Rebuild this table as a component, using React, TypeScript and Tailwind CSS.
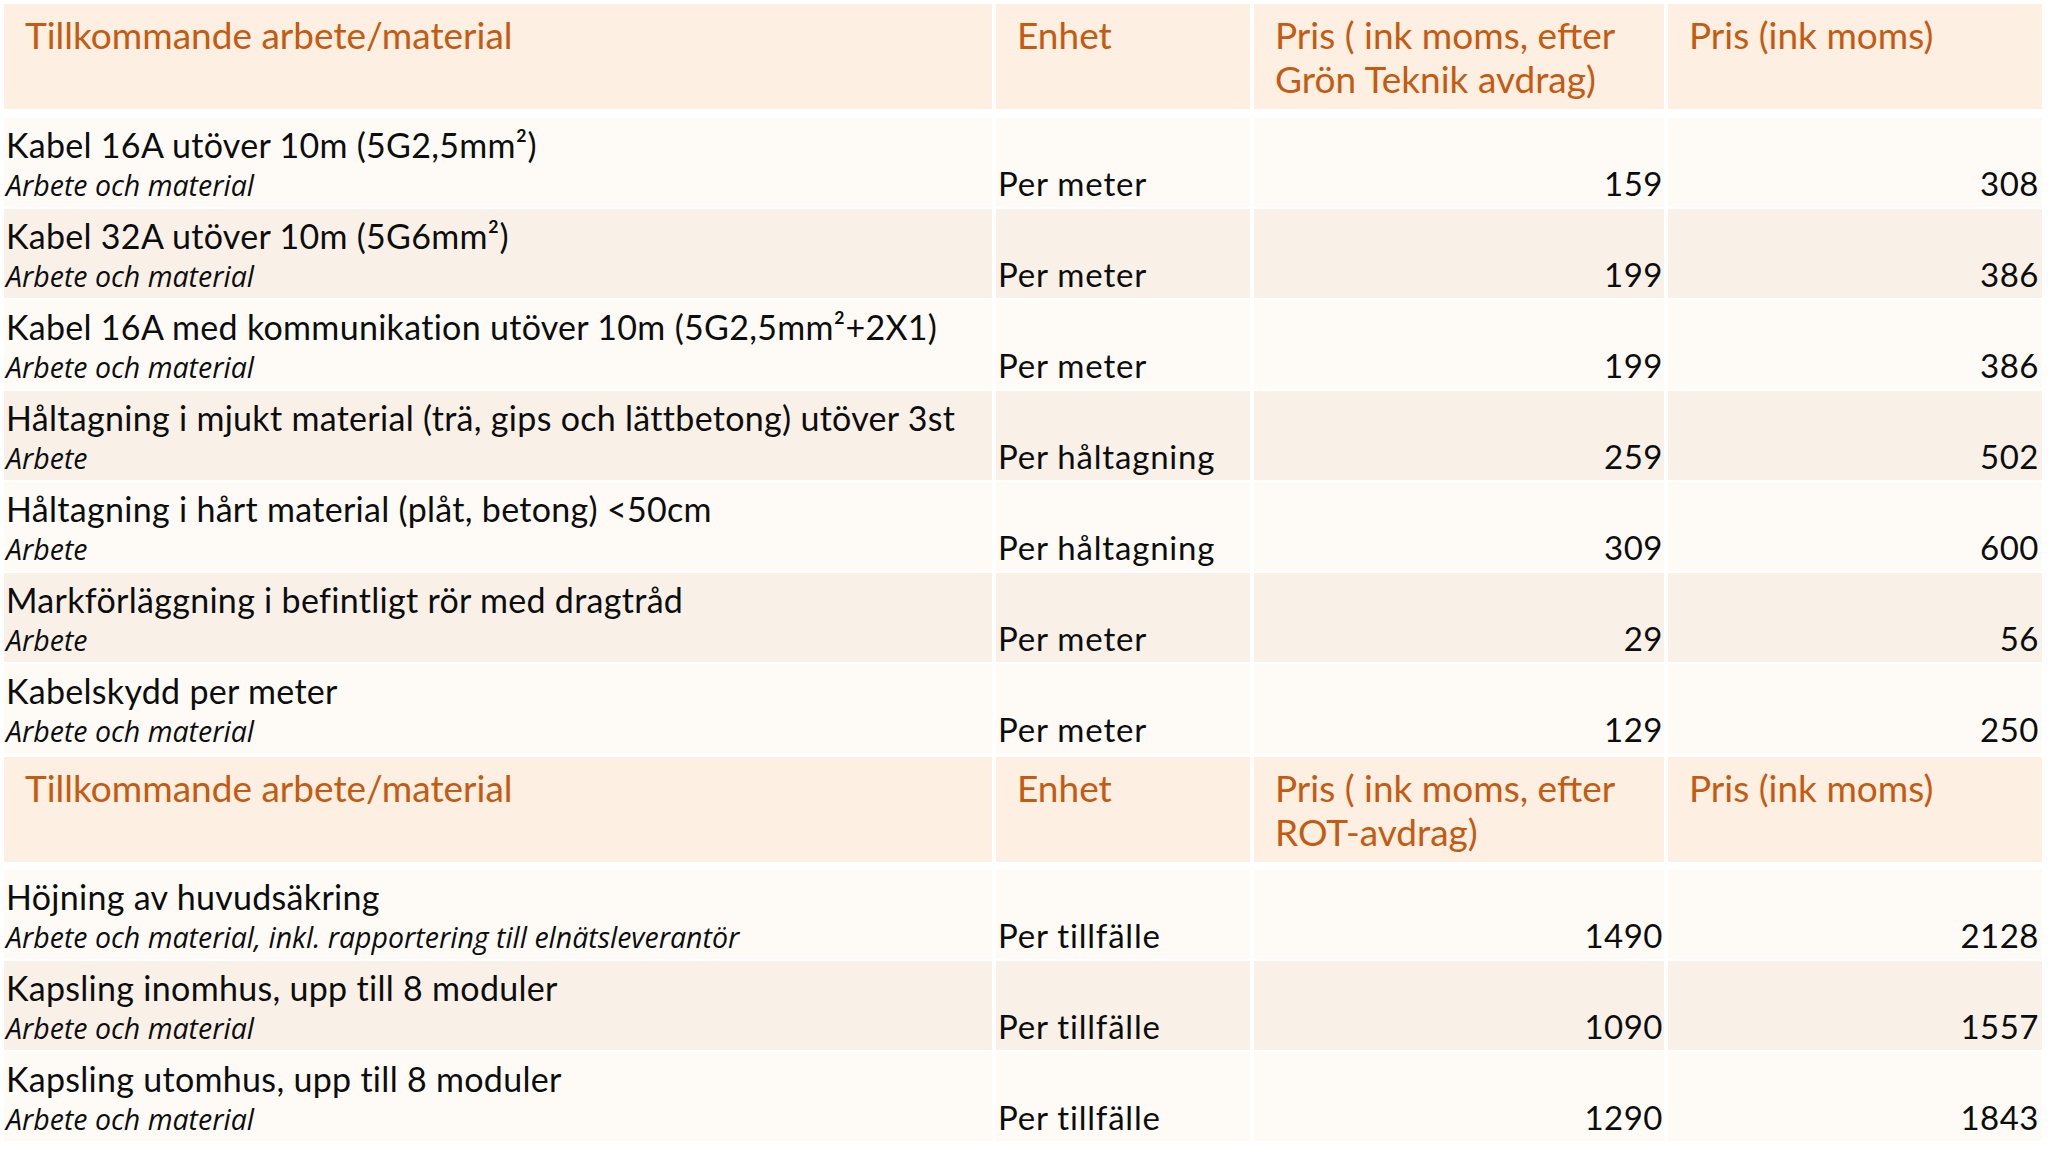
import type { ReactNode } from "react";

type Row = {
  title: ReactNode;
  sub: string;
  unit: string;
  green: string;
  full: string;
};

const firstRows: Row[] = [
  { title: "Kabel 16A utöver 10m (5G2,5mm²)", sub: "Arbete och material", unit: "Per meter", green: "159", full: "308" },
  { title: "Kabel 32A utöver 10m (5G6mm²)", sub: "Arbete och material", unit: "Per meter", green: "199", full: "386" },
  { title: "Kabel 16A med kommunikation utöver 10m (5G2,5mm²+2X1)", sub: "Arbete och material", unit: "Per meter", green: "199", full: "386" },
  { title: "Håltagning i mjukt material (trä, gips och lättbetong) utöver 3st", sub: "Arbete", unit: "Per håltagning", green: "259", full: "502" },
  { title: "Håltagning i hårt material (plåt, betong) <50cm", sub: "Arbete", unit: "Per håltagning", green: "309", full: "600" },
  { title: "Markförläggning i befintligt rör med dragtråd", sub: "Arbete", unit: "Per meter", green: "29", full: "56" },
  { title: "Kabelskydd per meter", sub: "Arbete och material", unit: "Per meter", green: "129", full: "250" },
];

const secondRows: Row[] = [
  { title: "Höjning av huvudsäkring", sub: "Arbete och material, inkl. rapportering till elnätsleverantör", unit: "Per tillfälle", green: "1490", full: "2128" },
  { title: "Kapsling inomhus, upp till 8 moduler", sub: "Arbete och material", unit: "Per tillfälle", green: "1090", full: "1557" },
  { title: "Kapsling utomhus, upp till 8 moduler", sub: "Arbete och material", unit: "Per tillfälle", green: "1290", full: "1843" },
];

const grid = "grid grid-cols-[988px_254px_410px_374px] gap-x-[4px]";

function HeaderRow({ priceLabel }: { priceLabel: ReactNode }) {
  const cell = "h-[105px] bg-[#fdf0e2] pl-[21px] pt-[9px] text-[37px] leading-[44px] text-[#c55a11]";
  return (
    <div className={grid}>
      <div className={cell}>Tillkommande arbete/material</div>
      <div className={cell}>Enhet</div>
      <div className={cell}>{priceLabel}</div>
      <div className={cell}>Pris (ink moms)</div>
    </div>
  );
}

function DataRow({ row, even }: { row: Row; even: boolean }) {
  const bg = even ? "bg-[#f9f1e8]" : "bg-[#fefbf7]";
  const tail = `flex h-[89px] items-end pb-[6px] text-[33px] leading-[36px] ${bg}`;
  return (
    <div className={grid}>
      <div className={`h-[89px] whitespace-nowrap pl-[2px] pt-[7px] ${bg}`}>
        <div className="text-[34px] leading-[40px] tracking-[0.3px]">{row.title}</div>
        <div className="text-[28.5px] italic leading-[41px] [font-family:'Open_Sans',sans-serif]">{row.sub}</div>
      </div>
      <div className={`${tail} pl-[2px] tracking-[0.8px]`}>{row.unit}</div>
      <div className={`${tail} justify-end pr-[1px] tracking-[0.5px]`}>{row.green}</div>
      <div className={`${tail} justify-end pr-[3px] tracking-[0.5px]`}>{row.full}</div>
    </div>
  );
}

export default function App() {
  return (
    <div className="min-h-[1165px] w-[2048px] bg-white pl-[4px] pt-[4px] text-[#0d0d0d] [font-family:Lato,'Open_Sans',sans-serif]">
      <HeaderRow
        priceLabel={
          <>
            Pris ( ink moms, efter
            <br />
            Grön Teknik avdrag)
          </>
        }
      />
      <div className="mt-[9px] flex flex-col gap-[2px]">
        {firstRows.map((row, i) => (
          <DataRow key={i} row={row} even={i % 2 === 1} />
        ))}
      </div>
      <div className="mt-[4px]">
        <HeaderRow
          priceLabel={
            <>
              Pris ( ink moms, efter
              <br />
              ROT-avdrag)
            </>
          }
        />
      </div>
      <div className="mt-[8px] flex flex-col gap-[2px]">
        {secondRows.map((row, i) => (
          <DataRow key={i} row={row} even={i % 2 === 1} />
        ))}
      </div>
    </div>
  );
}
